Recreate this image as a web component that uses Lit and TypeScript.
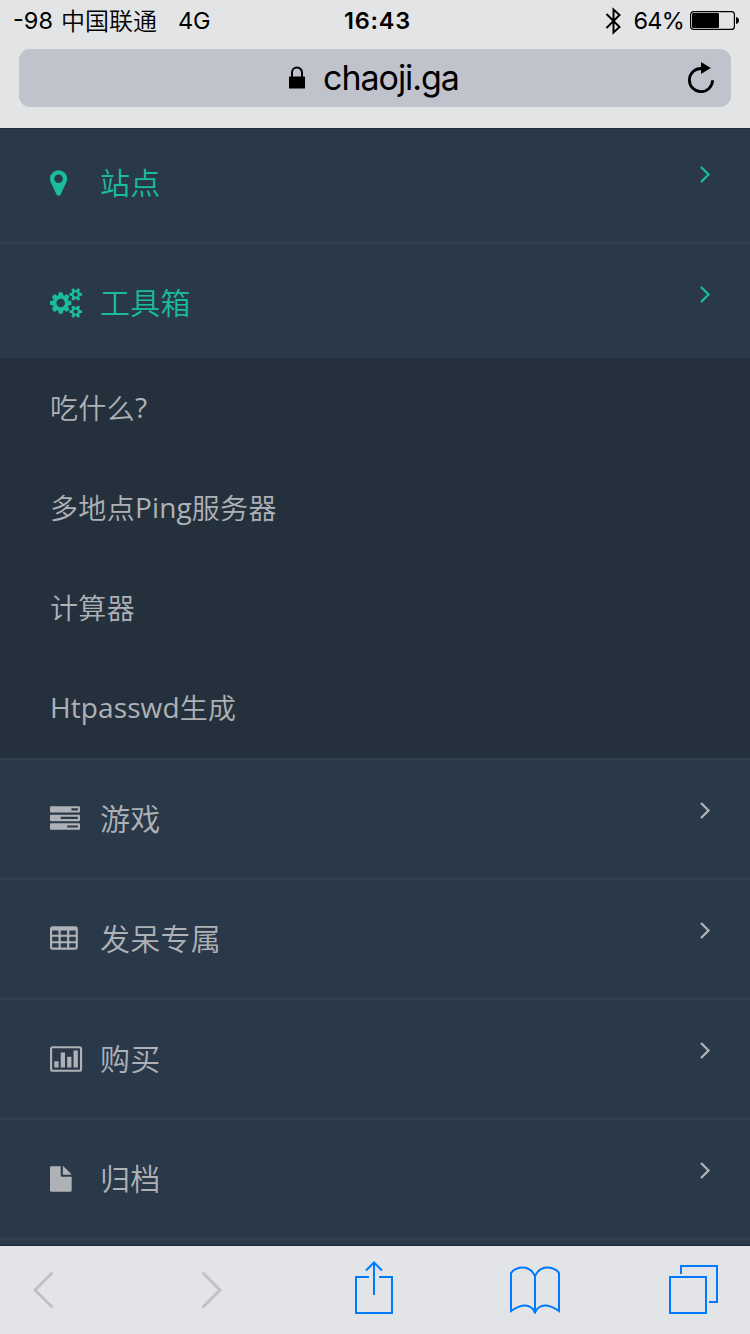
import { LitElement, html, svg, css, TemplateResult } from "lit";
import { customElement, property } from "lit/decorators.js";

interface Entry {
  icon: string;
  label: string;
  active?: boolean;
  children?: string[];
}

const ENTRIES: Entry[] = [
  { icon: "marker", label: "站点", active: true },
  {
    icon: "cogs",
    label: "工具箱",
    active: true,
    children: ["吃什么?", "多地点Ping服务器", "计算器", "Htpasswd生成"],
  },
  { icon: "tasks", label: "游戏" },
  { icon: "table", label: "发呆专属" },
  { icon: "chart", label: "购买" },
  { icon: "file", label: "归档" },
];

const SMALL_GEAR =
  "v140q0 16-149 31-12 27-30 52 51 113 51 138 0 4-4 7-122 71-124 71-8 0-46-47t-52-68q-20 2-30 2t-30-2q-14 21-52 68t-46 47q-2 0-124-71-4-3-4-7 0-25 51-138-18-25-30-52-149-15-149-31v-140q0-16 149-31 13-29 30-52-51-113-51-138 0-4 4-7 4-2 35-20t59-34 30-16q8 0 46 46.5t52 67.5q20-2 30-2t30 2q51-71 92-112l6-2q4 0 124 70 4 3 4 7 0 25-51 138 17 23 30 52 149 15 149 31z";
const BAR =
  "v256q0 26-19 45t-45 19h-1664q-26 0-45-19t-19-45v-256q0-26 19-45t45-19h1664q26 0 45 19t19 45z";
const cell = (x: number, y: number) =>
  `M${x + 32} ${y}h320q32 0 32 32v192q0 32-32 32h-320q-32 0-32-32v-192q0-32 32-32z`;
const CELLS = [384, 768, 1152]
  .flatMap((y) => [128, 640, 1152].map((x) => cell(x, y)))
  .join("");

// Glyphs on a 1792-unit em
const GLYPHS: Record<string, string> = {
  marker:
    "M768 640q0-106-75-181t-181-75-181 75-75 181 75 181 181 75 181-75 75-181zm256 0q0 109-33 179l-364 774q-16 33-47.5 52t-67.5 19-67.5-19-46.5-52l-365-774q-33-70-33-179 0-212 150-362t362-150 362 150 150 362z",
  cogs:
    "M896 896q0-106-75-181t-181-75-181 75-75 181 75 181 181 75 181-75 75-181zm768 512q0-52-38-90t-90-38-90 38-38 90q0 53 37.5 90.5t90.5 37.5 90.5-37.5 37.5-90.5zm0-1024q0-52-38-90t-90-38-90 38-38 90q0 53 37.5 90.5t90.5 37.5 90.5-37.5 37.5-90.5zm-384 421v185q0 10-7 19.5t-16 10.5l-155 24q-11 35-32 76 34 48 90 115 7 10 7 20 0 12-7 19-23 30-82.5 89.5t-78.5 59.5q-11 0-21-7l-115-90q-37 19-77 31-11 108-23 155-7 24-30 24h-186q-11 0-20-7.5t-10-17.5l-23-153q-34-10-75-31l-118 89q-7 7-20 7-11 0-21-8-144-133-144-160 0-9 7-19 10-14 41-53t47-61q-23-44-35-82l-152-24q-10-1-17-9.5t-7-19.5v-185q0-10 7-19.5t16-10.5l155-24q11-35 32-76-34-48-90-115-7-11-7-20 0-12 7-20 22-30 82-89t79-59q11 0 21 7l115 90q34-18 77-32 11-108 23-154 7-24 30-24h186q11 0 20 7.5t10 17.5l23 153q34 10 75 31l118-89q8-7 20-7 11 0 21 8 144 133 144 160 0 9-7 19-12 16-42 54t-45 60q23 48 34 82l152 23q10 2 17 10.5t7 19.5z" +
    "M1920 1338" + SMALL_GEAR + "M1920 314" + SMALL_GEAR,
  tasks:
    "M1024 1408h640v-128h-640v128zm-384-512h1024v-128h-1024v128zm640-512h384v-128h-384v128z" +
    "M1792 1216" + BAR + "M1792 704" + BAR + "M1792 192" + BAR,
  table:
    "M160 128h1344q160 0 160 160v1088q0 160-160 160h-1344q-160 0-160-160v-1088q0-160 160-160z" + CELLS,
  chart:
    "M160 128h1600q160 0 160 160v1216q0 160-160 160h-1600q-160 0-160-160v-1216q0-160 160-160z" +
    "M160 256q-32 0-32 32v1216q0 32 32 32h1600q32 0 32-32v-1216q0-32-32-32z" +
    "M256 1024h256v384h-256zM640 512h256v896h-256zM1024 768h256v640h-256zM1408 384h256v1024h-256z",
  file:
    "M96 128h544v544q0 40 28 68t68 28h560v800q0 40-28 68t-68 28h-1104q-40 0-68-28t-28-68v-1344q0-40 28-68t68-28z" +
    "M768 640v-508q40 10 66 38l404 404q30 30 38 66z",
};

@customElement("menu-row")
export class MenuRow extends LitElement {
  @property() icon = "";
  @property() label = "";
  @property({ type: Boolean, reflect: true }) active = false;

  static styles = css`
    :host {
      display: flex;
      box-sizing: border-box;
      height: 120px;
      padding: 44px 39px 0 50px;
      border-top: 2px solid #304051;
      background: #2a3949;
      color: #aeb2b7;
    }
    :host([active]) {
      color: #1abc9c;
    }
    .glyph {
      width: 50px;
      height: 30px;
      flex: none;
    }
    .glyph svg {
      display: block;
      overflow: visible;
    }
    .label {
      flex: 1;
      margin-top: -7px;
      line-height: 44px;
      font-size: 30px;
      letter-spacing: 0.25px;
    }
    .arrow {
      display: block;
      margin-top: -3px;
    }
  `;

  render() {
    return html`
      <span class="glyph">
        <svg width="32.14" height="30" viewBox="0 0 1920 1792">
          <path fill="currentColor" fill-rule="evenodd" d=${GLYPHS[this.icon] ?? ""}></path>
        </svg>
      </span>
      <span class="label">${this.label}</span>
      <svg class="arrow" width="12" height="19" viewBox="0 0 12 19">
        <path d="M2 2L9.5 9.5L2 17" fill="none" stroke="currentColor" stroke-width="2.3"></path>
      </svg>
    `;
  }
}

@customElement("status-bar")
export class StatusBar extends LitElement {
  static styles = css`
    :host {
      display: grid;
      grid-template-columns: 1fr auto 1fr;
      height: 41px;
      line-height: 41px;
      font-size: 23.5px;
      color: #000;
      padding: 0 11px 0 13px;
      box-sizing: border-box;
    }
    .carrier {
      display: flex;
    }
    .operator {
      margin: 1px 21px -1px 8px;
      font-size: 24px;
      font-weight: 350;
    }
    .time {
      padding-left: 3px;
      font-weight: 600;
      letter-spacing: 0.8px;
    }
    .power {
      display: flex;
      justify-content: flex-end;
      align-items: center;
    }
    .percent {
      letter-spacing: -0.8px;
    }
    .bt {
      margin-right: 12px;
    }
    .battery {
      margin-left: 6px;
    }
    svg {
      display: block;
    }
  `;

  render() {
    return html`
      <div class="carrier"><span>-98</span><span class="operator">中国联通</span><span>4G</span></div>
      <div class="time">16:43</div>
      <div class="power">
        <svg class="bt" width="17" height="28" viewBox="0 0 17 28">
          <path d="M1.5 7L14.5 20L8.5 25.5V2.5L14.5 8L1.5 21" fill="none" stroke="#000" stroke-width="2"></path>
        </svg>
        <span class="percent">64%</span>
        <svg class="battery" width="49" height="19" viewBox="0 0 49 19">
          <rect x=".6" y=".6" width="43.8" height="17.8" rx="3" fill="none" stroke="#000" stroke-width="1.2"></rect>
          <rect x="2" y="2" width="27" height="15" rx="1.2"></rect>
          <path d="M46 6q3 .6 3 3.500t-3 3.500z"></path>
        </svg>
      </div>
    `;
  }
}

@customElement("address-bar")
export class AddressBar extends LitElement {
  static styles = css`
    :host {
      display: grid;
      grid-template-columns: 1fr auto 1fr;
      align-items: center;
      height: 58px;
      margin: 8px 19px 0;
      border-radius: 11px;
      background: #c1c3cc;
      color: #000;
    }
    .site {
      grid-column: 2;
      display: flex;
      align-items: center;
      gap: 18px;
      margin-top: -1px;
      padding-right: 2px;
      line-height: 58px;
      font-size: 34px;
      letter-spacing: -1.05px;
    }
    .lock {
      display: block;
    }
    .reload {
      justify-self: end;
      margin-right: 15px;
      margin-top: -2px;
    }
  `;

  render() {
    return html`
      <div class="site">
        <svg class="lock" width="16" height="23" viewBox="0 0 16 23">
          <rect y="10.500" width="16" height="12" rx=".6"></rect>
          <path d="M3 11V6.500a5 5 0 0 1 10 0V11" fill="none" stroke="#000" stroke-width="2"></path>
        </svg>
        <span>chaoji.ga</span>
      </div>
      <svg class="reload" width="30" height="32" viewBox="0 0 30 32">
        <path d="M15.500 7.500A11.600 11.600 0 1 0 26.600 19.300" fill="none" stroke="#000" stroke-width="2.800"></path>
        <path d="M15 1L24.800 7L15 13z"></path>
      </svg>
    `;
  }
}

const tool = (name: string, w: number, h: number, body: TemplateResult) => html`
  <svg class=${name} width=${w} height=${h} viewBox="0 0 ${w} ${h}">${body}</svg>
`;

@customElement("tool-bar")
export class ToolBar extends LitElement {
  static styles = css`
    :host {
      display: flex;
      align-items: flex-start;
      box-sizing: border-box;
      height: 89px;
      padding: 14px 31px 0 32px;
      border-top: 1px solid #1c2a38;
      background: #e2e4e7;
    }
    svg {
      display: block;
      flex: none;
      fill: none;
      stroke: #007aff;
      stroke-width: 2;
    }
    .back,
    .forward {
      margin-top: 11px;
      stroke: #bfc0c2;
      stroke-width: 2.8;
    }
    .forward {
      margin-left: 147px;
    }
    .share {
      margin-left: 132px;
    }
    .book {
      margin-left: 117px;
    }
    .tabs {
      margin-left: 109px;
    }
  `;

  render() {
    return html`
      ${tool("back", 22, 38, svg`<path d="M20.500 1.500L3 19L20.500 36.500"></path>`)}
      ${tool("forward", 22, 38, svg`<path d="M1.500 1.500L19 19L1.500 36.500"></path>`)}
      ${tool("share", 38, 54, svg`<path d="M14 17H1V53H37V17H24M19 35V3M11 10.500L19 2.500L27 10.500"></path>`)}
      ${tool("book", 50, 54, svg`<path d="M25 53V16C22 10 18 7.500 13 7.500C8 7.500 3.500 9.500 1 13V51C6 47.500 10.500 45.500 15 45.500C19.500 45.500 23 48 25 52.500C27 48 30.500 45.500 35 45.500C39.500 45.500 44 47.500 49 51V13C46.500 9.500 42 7.500 37 7.500C32 7.500 28 10 25 16"></path>`)}
      ${tool("tabs", 50, 54, svg`<path d="M1 17H37V53H1zM12 14V6H48V42H40"></path>`)}
    `;
  }
}

// Latin runs carry a heavier weight than the Chinese text around them
const mixed = (text: string) =>
  text
    .split(/([\x20-\x7e]+)/)
    .filter(Boolean)
    .map((part) => (/^[\x20-\x7e]/.test(part) ? html`<span class="latin">${part}</span>` : part));

@customElement("app-root")
export class AppRoot extends LitElement {
  static styles = css`
    :host {
      display: flex;
      flex-direction: column;
      width: 750px;
      height: 1334px;
      overflow: hidden;
      background: #2a3949;
      font-family: Inter, "Noto Sans CJK SC", sans-serif;
    }
    header {
      flex: none;
      height: 128px;
      background: #e3e4e6;
    }
    nav {
      flex: 1;
      min-height: 0;
      overflow: hidden;
      box-sizing: border-box;
      border-top: 1px solid #1f2d3c;
      font-family: "Open Sans", "Noto Sans CJK SC", sans-serif;
      font-weight: 350;
    }
    .list {
      margin-top: -7px;
    }
    .open {
      height: 116px;
    }
    .sub {
      margin: 0;
      padding: 0;
      list-style: none;
      background: #24313d;
    }
    .sub li {
      height: 100px;
      padding-left: 50px;
      line-height: 100px;
      font-size: 28px;
      letter-spacing: 0.35px;
      color: #aeb2b7;
    }
    .latin {
      font-weight: 400;
      line-height: 1;
      letter-spacing: 0.1px;
      vertical-align: 1px;
    }
    .end {
      height: 2px;
      background: #304051;
    }
    tool-bar {
      flex: none;
    }
  `;

  render() {
    return html`
      <header>
        <status-bar></status-bar>
        <address-bar></address-bar>
      </header>
      <nav>
        <div class="list">
          ${ENTRIES.map(
            (e) => html`
              <menu-row
                class=${e.children ? "open" : ""}
                .icon=${e.icon}
                .label=${e.label}
                ?active=${e.active}
              ></menu-row>
              ${e.children
                ? html`<ul class="sub">${e.children.map((c) => html`<li>${mixed(c)}</li>`)}</ul>`
                : ""}
            `
          )}
          <div class="end"></div>
        </div>
      </nav>
      <tool-bar></tool-bar>
    `;
  }
}
